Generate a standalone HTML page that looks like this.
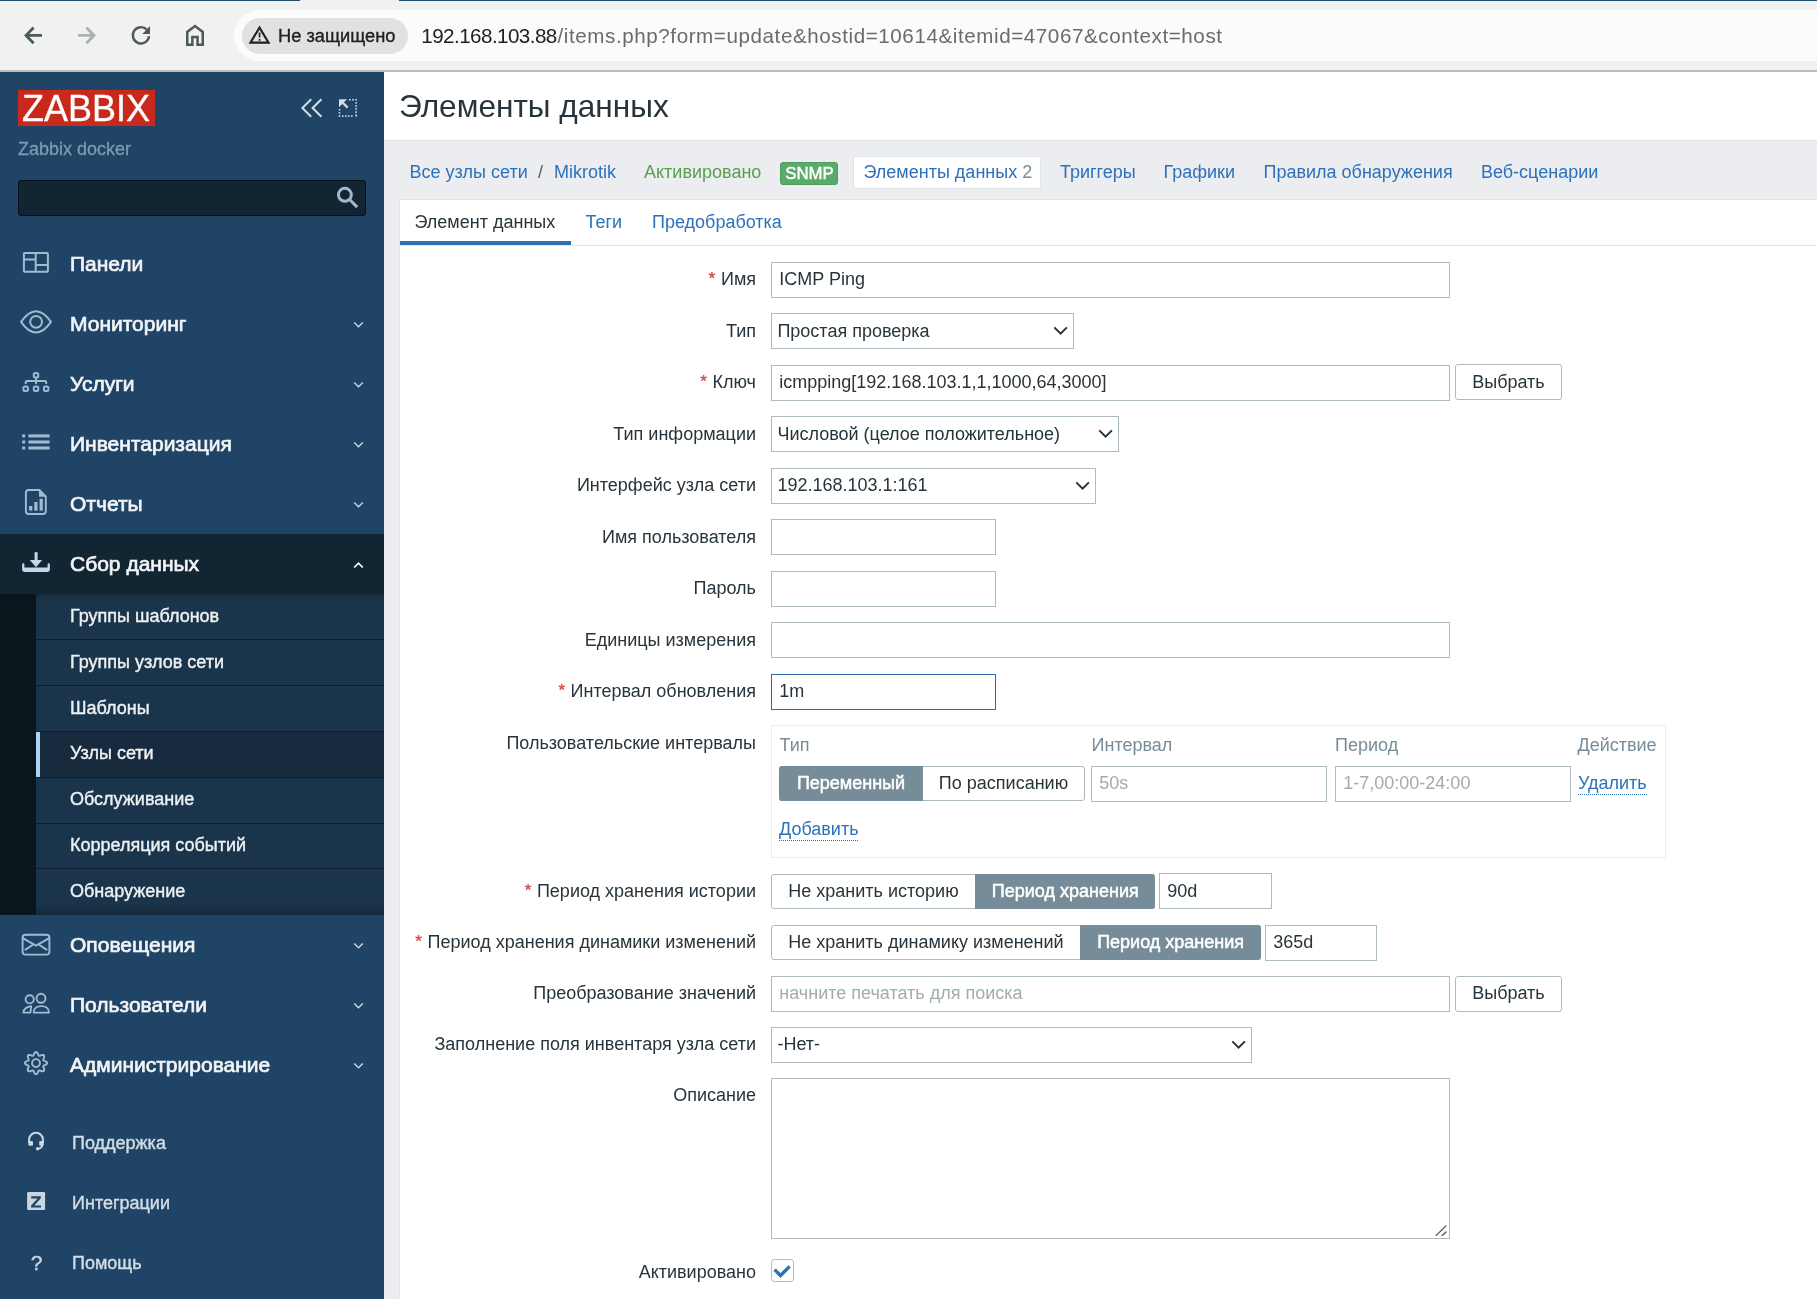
<!DOCTYPE html>
<html><head><meta charset="utf-8"><title>Zabbix</title>
<style>
html,body{margin:0;padding:0;}
body{width:1817px;height:1299px;overflow:hidden;position:relative;background:#ebedf0;font-family:"Liberation Sans",sans-serif;}
.t{position:absolute;white-space:nowrap;}
svg{position:absolute;overflow:visible;}
</style></head><body>
<div id="root" style="position:absolute;left:0;top:0;width:1817px;height:1299px;overflow:hidden">
<div style="position:absolute;left:0px;top:0px;width:1817px;height:70px;background:#f1f1f1"></div>
<div style="position:absolute;left:0px;top:0px;width:300px;height:1px;background:#1d4f6b"></div>
<div style="position:absolute;left:399px;top:0px;width:1418px;height:1px;background:#1d4f6b"></div>
<div style="position:absolute;left:0px;top:70px;width:1817px;height:2px;background:#b9bdbc"></div>
<div style="position:absolute;left:234px;top:10px;width:1623px;height:51px;background:#fbfbfb;border-radius:26px"></div>
<div style="position:absolute;left:242px;top:18px;width:166px;height:36px;background:#e1e1e1;border-radius:18px"></div>
<svg style="left:0;top:0" width="1817" height="72" viewBox="0 0 1817 72"><g fill="none" stroke="#4b5b56" stroke-width="2.8" stroke-linecap="butt"><path d="M42 35.4 H26.5 M33.6 27.6 L26 35.4 L33.6 43.2"/></g><g fill="none" stroke="#a9b2ae" stroke-width="2.8"><path d="M78 35.4 H93.5 M86.4 27.6 L94 35.4 L86.4 43.2"/></g><g fill="none" stroke="#4b5b56" stroke-width="2.4"><path d="M149.1 36.2 A8.15 8.15 0 1 1 146.8 29.6"/></g><path d="M150 26.1 V33.9 H142.3 Z" fill="#4b5b56"/><path d="M187.25 44.65 V31.9 L195 26 L202.75 31.9 V44.65 H197.55 V37.05 H192.35 V44.65 Z" fill="none" stroke="#4b5b56" stroke-width="2.5" stroke-linejoin="miter"/><path d="M259.5 27.6 L250.4 42.6 H268.6 Z" fill="none" stroke="#202124" stroke-width="2.1" stroke-linejoin="miter"/><rect x="258.7" y="32.5" width="1.7" height="5" fill="#202124"/><rect x="258.7" y="39" width="1.7" height="1.8" fill="#202124"/></svg>
<div style="position:absolute;left:0px;top:72px;width:384px;height:1227px;background:#1f4466"></div>
<div style="position:absolute;left:18px;top:90px;width:137px;height:36px;background:#c8291c"></div>
<svg style="left:0;top:0" width="384" height="1299" viewBox="0 0 384 1299"><g fill="none" stroke="#d3dde5" stroke-width="2"><path d="M311.2 99.2 L302.4 108 L311.2 116.8 M321.4 99.2 L312.6 108 L321.4 116.8"/></g><g fill="#d3dde5"><path d="M339 99.2 H347 L339 107.2 Z"/><rect x="355.30" y="98.95" width="1.6" height="1.6"/><rect x="355.30" y="102.10" width="1.6" height="1.6"/><rect x="355.30" y="105.20" width="1.6" height="1.6"/><rect x="355.30" y="108.10" width="1.6" height="1.6"/><rect x="355.30" y="111.30" width="1.6" height="1.6"/><rect x="355.30" y="114.40" width="1.6" height="1.6"/><rect x="338.70" y="115.26" width="1.6" height="1.6"/><rect x="341.90" y="115.26" width="1.6" height="1.6"/><rect x="345.00" y="115.26" width="1.6" height="1.6"/><rect x="347.90" y="115.26" width="1.6" height="1.6"/><rect x="351.00" y="115.26" width="1.6" height="1.6"/><rect x="338.70" y="109.00" width="1.6" height="1.6"/><rect x="338.70" y="112.10" width="1.6" height="1.6"/><rect x="349.00" y="98.95" width="1.6" height="1.6"/><rect x="352.20" y="98.95" width="1.6" height="1.6"/><path d="M355.3 116.8 L356.8 115.3 L356.8 116.8 Z"/></g><path d="M341.5 101.5 L347.6 107.6" stroke="#d3dde5" stroke-width="2.3"/></svg>
<div style="position:absolute;left:18px;top:180px;width:346px;height:34px;background:#112533;border:1px solid #071118;border-radius:3px"></div>
<svg style="left:0;top:0" width="384" height="300" viewBox="0 0 384 300"><circle cx="344.9" cy="194.8" r="6.45" fill="none" stroke="#a3b7c8" stroke-width="3"/><path d="M349.6 199.5 L357.2 207.1" stroke="#a3b7c8" stroke-width="3"/></svg>
<div style="position:absolute;left:0px;top:534px;width:384px;height:60px;background:#112533"></div>
<div style="position:absolute;left:0px;top:594px;width:384px;height:320.7px;background:#1a344b"></div>
<div style="position:absolute;left:0px;top:594px;width:36px;height:320.7px;background:#0a151c"></div>
<div style="position:absolute;left:36px;top:638.9px;width:348px;height:1px;background:#0d1d29"></div>
<div style="position:absolute;left:36px;top:684.8px;width:348px;height:1px;background:#0d1d29"></div>
<div style="position:absolute;left:36px;top:731.7px;width:348px;height:45.9px;background:#172a3e"></div>
<div style="position:absolute;left:36px;top:731.7px;width:4px;height:45.9px;background:#a7d5f7"></div>
<div style="position:absolute;left:36px;top:730.7px;width:348px;height:1px;background:#0d1d29"></div>
<div style="position:absolute;left:36px;top:776.6px;width:348px;height:1px;background:#0d1d29"></div>
<div style="position:absolute;left:36px;top:822.5px;width:348px;height:1px;background:#0d1d29"></div>
<div style="position:absolute;left:36px;top:868.4px;width:348px;height:1px;background:#0d1d29"></div>
<div style="position:absolute;left:36px;top:594px;width:348px;height:7px;background:linear-gradient(rgba(0,0,0,0.18), rgba(0,0,0,0))"></div>
<div style="position:absolute;left:36px;top:903px;width:348px;height:11.7px;background:linear-gradient(rgba(0,0,0,0), rgba(0,0,0,0.22))"></div>
<svg style="left:0;top:0" width="384" height="1299" viewBox="0 0 384 1299"><g fill="none" stroke="#c9d5df" stroke-width="1.5"><path d="M354.2 322.5 L358.5 326.8 L362.8 322.5"/><path d="M354.2 382.5 L358.5 386.8 L362.8 382.5"/><path d="M354.2 442.5 L358.5 446.8 L362.8 442.5"/><path d="M354.2 502.5 L358.5 506.8 L362.8 502.5"/><path d="M354.2 943.5 L358.5 947.8 L362.8 943.5"/><path d="M354.2 1003.5 L358.5 1007.8 L362.8 1003.5"/><path d="M354.2 1063.5 L358.5 1067.8 L362.8 1063.5"/></g><path d="M354.2 567.5 L358.5 563.2 L362.8 567.5" fill="none" stroke="#ffffff" stroke-width="1.7"/><g fill="none" stroke="#a1bbd1" stroke-width="2"><rect x="23.9" y="252.9" width="24" height="18.9" rx="1"/><path d="M35.7 252.9 V271.8 M23.9 259.6 H35.7 M35.7 265 H47.9"/><path d="M21 321.8 Q36 300.5 51 321.8 Q36 343.1 21 321.8 Z" stroke-linejoin="round"/><circle cx="36.1" cy="321.8" r="5.9"/></g><g fill="none" stroke="#a1bbd1" stroke-width="1.6"><g stroke-width="2"><rect x="33.8" y="373" width="4.5" height="4.4" rx="1.5"/><rect x="23.45" y="386.5" width="4.5" height="4.4" rx="1.5"/><rect x="33.8" y="386.5" width="4.5" height="4.4" rx="1.5"/><rect x="43.9" y="386.5" width="4.5" height="4.4" rx="1.5"/><path d="M36.05 377.4 V384 M25.7 384 V382.2 Q25.7 381 26.9 381 H45 Q46.2 381 46.2 382.2 V384"/></g></g><g fill="#a1bbd1"><rect x="22.2" y="434.4" width="3" height="3"/><rect x="22.2" y="440.5" width="3" height="3"/><rect x="22.2" y="446.5" width="3" height="3"/><rect x="28.4" y="434.4" width="21.2" height="3"/><rect x="28.4" y="440.5" width="21.2" height="3"/><rect x="28.4" y="446.5" width="21.2" height="3"/></g><g fill="none" stroke="#a1bbd1" stroke-width="1.6"><path d="M28.6 490 H39.4 L45.8 496.4 V511.3 Q45.8 514 43.1 514 H28.6 Q25.9 514 25.9 511.3 V492.7 Q25.9 490 28.6 490 Z" stroke-width="1.9"/></g><g fill="#a1bbd1"><path d="M39 489.5 L46.3 496.8 H39 Z"/><rect x="29.1" y="506" width="3.2" height="4.6"/><rect x="34.3" y="502" width="3.2" height="8.6"/><rect x="39.6" y="498.7" width="3.2" height="11.9"/></g><g fill="#c0d7ec"><rect x="34.6" y="552" width="3" height="9" rx="1.2"/><path d="M29.8 560 H42.2 L36 567.2 Z"/><path d="M22.1 564.3 Q22.1 563.2 23.25 563.2 Q24.4 563.2 24.4 564.3 V567.6 H47.6 V564.3 Q47.6 563.2 48.75 563.2 Q49.9 563.2 49.9 564.3 V569.6 Q49.9 571.9 47.6 571.9 H24.4 Q22.1 571.9 22.1 569.6 Z"/></g><g fill="none" stroke="#a1bbd1" stroke-width="1.9"><rect x="22.6" y="934.7" width="26.8" height="19.9" rx="2.8"/><path d="M23.2 938.3 L36 945.6 L48.8 938.3 M25.4 949.6 L32.2 945.2 M46.6 949.6 L39.8 945.2" stroke-linecap="round"/><circle cx="29.7" cy="999.3" r="4.1"/><circle cx="41" cy="998.3" r="4.5"/><path d="M31.2 1006.3 C27 1006.6 23.3 1009 23.3 1012.6 H30.4 Z" stroke-linejoin="round"/><path d="M33.6 1012.6 C33.6 1008.6 37 1006.1 41.3 1006.1 C45.6 1006.1 49 1008.6 49 1012.6 Z" stroke-linejoin="round"/><path d="M47.10 1063.10 L46.86 1063.81 L46.21 1064.44 L45.32 1064.95 L44.40 1065.35 L43.68 1065.71 L43.30 1066.12 L43.28 1066.69 L43.53 1067.45 L43.90 1068.38 L44.17 1069.37 L44.18 1070.28 L43.85 1070.95 L43.18 1071.28 L42.27 1071.27 L41.28 1071.00 L40.35 1070.63 L39.59 1070.38 L39.02 1070.40 L38.61 1070.78 L38.25 1071.50 L37.85 1072.42 L37.34 1073.31 L36.71 1073.96 L36.00 1074.20 L35.29 1073.96 L34.66 1073.31 L34.15 1072.42 L33.75 1071.50 L33.39 1070.78 L32.98 1070.40 L32.41 1070.38 L31.65 1070.63 L30.72 1071.00 L29.73 1071.27 L28.82 1071.28 L28.15 1070.95 L27.82 1070.28 L27.83 1069.37 L28.10 1068.38 L28.47 1067.45 L28.72 1066.69 L28.70 1066.12 L28.32 1065.71 L27.60 1065.35 L26.68 1064.95 L25.79 1064.44 L25.14 1063.81 L24.90 1063.10 L25.14 1062.39 L25.79 1061.76 L26.68 1061.25 L27.60 1060.85 L28.32 1060.49 L28.70 1060.08 L28.72 1059.51 L28.47 1058.75 L28.10 1057.82 L27.83 1056.83 L27.82 1055.92 L28.15 1055.25 L28.82 1054.92 L29.73 1054.93 L30.72 1055.20 L31.65 1055.57 L32.41 1055.82 L32.98 1055.80 L33.39 1055.42 L33.75 1054.70 L34.15 1053.78 L34.66 1052.89 L35.29 1052.24 L36.00 1052.00 L36.71 1052.24 L37.34 1052.89 L37.85 1053.78 L38.25 1054.70 L38.61 1055.42 L39.02 1055.80 L39.59 1055.82 L40.35 1055.57 L41.28 1055.20 L42.27 1054.93 L43.18 1054.92 L43.85 1055.25 L44.18 1055.92 L44.17 1056.83 L43.90 1057.82 L43.53 1058.75 L43.28 1059.51 L43.30 1060.08 L43.68 1060.49 L44.40 1060.85 L45.32 1061.25 L46.21 1061.76 L46.86 1062.39 L47.10 1063.10 Z"/><circle cx="36" cy="1063.1" r="3.95"/></g><g fill="none" stroke="#ccd7e0" stroke-width="2"><path d="M29.1 1143 V1139.6 A6.9 6.9 0 0 1 42.9 1139.6 V1143"/><path d="M42.3 1145.2 Q41.8 1148.4 37.8 1148.8"/></g><g fill="#ccd7e0"><rect x="28.4" y="1140.9" width="4.6" height="4.8" rx="1.2"/><rect x="39.2" y="1140.9" width="4.6" height="4.8" rx="1.2"/><circle cx="37.6" cy="1148.8" r="1.7"/></g><rect x="27.1" y="1192" width="18" height="18" rx="1.2" fill="#c9d5df"/><path d="M31.2 1196.3 H40.8 V1198.3 L34.3 1205.4 H41 V1207.6 H31.1 V1205.6 L37.6 1198.5 H31.2 Z" fill="#1f4466"/></svg>
<div style="position:absolute;left:384px;top:72px;width:1433px;height:68px;background:#ffffff"></div>
<div style="position:absolute;left:384px;top:140px;width:1433px;height:1px;background:#dfe4e7"></div>
<div style="position:absolute;left:780px;top:162px;width:56px;height:21px;background:#5aab6a;border:1px solid #4f9e5f;border-radius:3px"></div>
<div style="position:absolute;left:853px;top:156px;width:186px;height:31px;background:#ffffff;border:1px solid #dfe4e7;border-radius:3px"></div>
<div style="position:absolute;left:399px;top:199px;width:1428px;height:1110px;background:#ffffff;border:1px solid #dfe4e7"></div>
<div style="position:absolute;left:400px;top:245px;width:1417px;height:1px;background:#dfe4e7"></div>
<div style="position:absolute;left:400px;top:241px;width:171px;height:4px;background:#2f6fb3"></div>
<div style="position:absolute;left:771px;top:262px;width:677px;height:34px;background:#fff;border:1px solid #acbbc2"></div>
<div style="position:absolute;left:771px;top:313px;width:301px;height:34px;background:#fff;border:1px solid #acbbc2"></div>
<div style="position:absolute;left:771px;top:365px;width:677px;height:34px;background:#fff;border:1px solid #acbbc2"></div>
<div style="position:absolute;left:1455px;top:364px;width:105px;height:34px;background:#fff;border:1px solid #acbbc2;border-radius:3px"></div>
<div style="position:absolute;left:771px;top:416px;width:346px;height:34px;background:#fff;border:1px solid #acbbc2"></div>
<div style="position:absolute;left:771px;top:468px;width:323px;height:34px;background:#fff;border:1px solid #acbbc2"></div>
<div style="position:absolute;left:771px;top:519px;width:223px;height:34px;background:#fff;border:1px solid #acbbc2"></div>
<div style="position:absolute;left:771px;top:571px;width:223px;height:34px;background:#fff;border:1px solid #acbbc2"></div>
<div style="position:absolute;left:771px;top:622px;width:677px;height:34px;background:#fff;border:1px solid #acbbc2"></div>
<div style="position:absolute;left:771px;top:674px;width:223px;height:34px;background:#fff;border:1px solid #2c69a5"></div>
<div style="position:absolute;left:771px;top:725px;width:893px;height:131px;border:1px solid #ebeef0;background:#fff"></div>
<div style="position:absolute;left:779px;top:766px;width:304px;height:33px;background:#fff;border:1px solid #acbbc2;border-radius:3px"></div>
<div style="position:absolute;left:779px;top:766px;width:144px;height:35px;background:#768d99;border-radius:3px 0 0 3px"></div>
<div style="position:absolute;left:1091px;top:766px;width:234px;height:34px;background:#fff;border:1px solid #acbbc2"></div>
<div style="position:absolute;left:1335px;top:766px;width:234px;height:34px;background:#fff;border:1px solid #acbbc2"></div>
<svg style="left:0;top:0" width="1817" height="1299" viewBox="0 0 1817 1299"><g stroke="#2d71bb" stroke-width="1" stroke-dasharray="1 1"><path d="M1578 794.5 H1647"/><path d="M779 840.5 H859"/></g></svg>
<div style="position:absolute;left:771px;top:874px;width:382px;height:33px;background:#fff;border:1px solid #acbbc2;border-radius:3px"></div>
<div style="position:absolute;left:975px;top:874px;width:180px;height:35px;background:#768d99;border-radius:0 3px 3px 0"></div>
<div style="position:absolute;left:1159px;top:873px;width:111px;height:34px;background:#fff;border:1px solid #acbbc2"></div>
<div style="position:absolute;left:771px;top:925px;width:488px;height:33px;background:#fff;border:1px solid #acbbc2;border-radius:3px"></div>
<div style="position:absolute;left:1080px;top:925px;width:181px;height:35px;background:#768d99;border-radius:0 3px 3px 0"></div>
<div style="position:absolute;left:1265px;top:925px;width:110px;height:34px;background:#fff;border:1px solid #acbbc2"></div>
<div style="position:absolute;left:771px;top:976px;width:677px;height:34px;background:#fff;border:1px solid #acbbc2"></div>
<div style="position:absolute;left:1455px;top:976px;width:105px;height:33.5px;background:#fff;border:1px solid #acbbc2;border-radius:3px"></div>
<div style="position:absolute;left:771px;top:1027px;width:479px;height:34px;background:#fff;border:1px solid #acbbc2"></div>
<div style="position:absolute;left:771px;top:1078px;width:677px;height:159px;background:#fff;border:1px solid #acbbc2"></div>
<svg style="left:0;top:0" width="1817" height="1299" viewBox="0 0 1817 1299"><g fill="none" stroke="#505050" stroke-width="1.3" stroke-linecap="round"><path d="M1436.2 1235.4 L1446 1225.9 M1442.2 1235.4 L1446 1231.9"/></g><g fill="none" stroke="#28343b" stroke-width="2"><path d="M1054.3 327.40000000000003 L1060.6 333.7 L1066.8999999999999 327.40000000000003"/><path d="M1099.3 430.40000000000003 L1105.6 436.7 L1111.8999999999999 430.40000000000003"/><path d="M1076.3 482.40000000000003 L1082.6 488.7 L1088.8999999999999 482.40000000000003"/><path d="M1232.3 1041.3999999999999 L1238.6 1047.7 L1244.8999999999999 1041.3999999999999"/></g><rect x="771.5" y="1259.5" width="22" height="22" rx="3" fill="#fff" stroke="#acbbc2" stroke-width="1"/><path d="M774.6 1269.6 L780.5 1275.5 L789.6 1266.4" fill="none" stroke="#2f6fb5" stroke-width="3.4"/><path d="M711.90 275.10 L711.90 272.40 M711.90 275.10 L714.47 274.27 M711.90 275.10 L713.49 277.28 M711.90 275.10 L710.31 277.28 M711.90 275.10 L709.33 274.27 M703.60 378.10 L703.60 375.40 M703.60 378.10 L706.17 377.27 M703.60 378.10 L705.19 380.28 M703.60 378.10 L702.01 380.28 M703.60 378.10 L701.03 377.27 M561.80 687.10 L561.80 684.40 M561.80 687.10 L564.37 686.27 M561.80 687.10 L563.39 689.28 M561.80 687.10 L560.21 689.28 M561.80 687.10 L559.23 686.27 M528.10 887.10 L528.10 884.40 M528.10 887.10 L530.67 886.27 M528.10 887.10 L529.69 889.28 M528.10 887.10 L526.51 889.28 M528.10 887.10 L525.53 886.27 M418.60 938.10 L418.60 935.40 M418.60 938.10 L421.17 937.27 M418.60 938.10 L420.19 940.28 M418.60 938.10 L417.01 940.28 M418.60 938.10 L416.03 937.27" fill="none" stroke="#d9534f" stroke-width="1.5" stroke-linecap="round"/></svg>
<div id="txt" style="position:absolute;left:0;top:0;width:1817px;height:1299px;will-change:transform">
<div class="t" style="left:278px;top:27.01px;font-size:18.3px;line-height:18.3px;color:#202124;font-weight:400;-webkit-text-stroke:0.35px #202124;">Не защищено</div>
<div class="t" style="left:421.3px;top:26.16px;font-size:20.6px;line-height:20.6px;color:#202124;font-weight:400;letter-spacing:-0.55px;">192.168.103.88</div>
<div class="t" style="left:557.5px;top:26.16px;font-size:20.6px;line-height:20.6px;color:#6b6b6b;font-weight:400;letter-spacing:0.58px;">/items.php?form=update&amp;hostid=10614&amp;itemid=47067&amp;context=host</div>
<div class="t" style="left:22px;top:90.72px;font-size:36px;line-height:36px;color:#ffffff;font-weight:400;-webkit-text-stroke:0.3px #fff;">ZABBIX</div>
<div class="t" style="left:18px;top:139.56px;font-size:18px;line-height:18px;color:#7f9bb0;font-weight:400;-webkit-text-stroke:0.3px #7f9bb0;">Zabbix docker</div>
<div class="t" style="left:70px;top:253.22px;font-size:21px;line-height:21px;color:#f2f4f6;font-weight:400;-webkit-text-stroke:0.7px #f2f4f6;">Панели</div>
<div class="t" style="left:70px;top:313.22px;font-size:21px;line-height:21px;color:#f2f4f6;font-weight:400;-webkit-text-stroke:0.7px #f2f4f6;">Мониторинг</div>
<div class="t" style="left:70px;top:373.22px;font-size:21px;line-height:21px;color:#f2f4f6;font-weight:400;-webkit-text-stroke:0.7px #f2f4f6;">Услуги</div>
<div class="t" style="left:70px;top:433.22px;font-size:21px;line-height:21px;color:#f2f4f6;font-weight:400;-webkit-text-stroke:0.7px #f2f4f6;">Инвентаризация</div>
<div class="t" style="left:70px;top:493.22px;font-size:21px;line-height:21px;color:#f2f4f6;font-weight:400;-webkit-text-stroke:0.7px #f2f4f6;">Отчеты</div>
<div class="t" style="left:70px;top:553.22px;font-size:21px;line-height:21px;color:#f2f4f6;font-weight:400;-webkit-text-stroke:0.7px #f2f4f6;">Сбор данных</div>
<div class="t" style="left:70px;top:606.76px;font-size:18px;line-height:18px;color:#eef1f3;font-weight:400;-webkit-text-stroke:0.4px #eef1f3;">Группы шаблонов</div>
<div class="t" style="left:70px;top:652.66px;font-size:18px;line-height:18px;color:#eef1f3;font-weight:400;-webkit-text-stroke:0.4px #eef1f3;">Группы узлов сети</div>
<div class="t" style="left:70px;top:698.56px;font-size:18px;line-height:18px;color:#eef1f3;font-weight:400;-webkit-text-stroke:0.4px #eef1f3;">Шаблоны</div>
<div class="t" style="left:70px;top:744.46px;font-size:18px;line-height:18px;color:#eef1f3;font-weight:400;-webkit-text-stroke:0.4px #eef1f3;">Узлы сети</div>
<div class="t" style="left:70px;top:790.36px;font-size:18px;line-height:18px;color:#eef1f3;font-weight:400;-webkit-text-stroke:0.4px #eef1f3;">Обслуживание</div>
<div class="t" style="left:70px;top:836.26px;font-size:18px;line-height:18px;color:#eef1f3;font-weight:400;-webkit-text-stroke:0.4px #eef1f3;">Корреляция событий</div>
<div class="t" style="left:70px;top:882.16px;font-size:18px;line-height:18px;color:#eef1f3;font-weight:400;-webkit-text-stroke:0.4px #eef1f3;">Обнаружение</div>
<div class="t" style="left:70px;top:934.22px;font-size:21px;line-height:21px;color:#f2f4f6;font-weight:400;-webkit-text-stroke:0.7px #f2f4f6;">Оповещения</div>
<div class="t" style="left:70px;top:994.22px;font-size:21px;line-height:21px;color:#f2f4f6;font-weight:400;-webkit-text-stroke:0.7px #f2f4f6;">Пользователи</div>
<div class="t" style="left:70px;top:1054.22px;font-size:21px;line-height:21px;color:#f2f4f6;font-weight:400;-webkit-text-stroke:0.7px #f2f4f6;">Администрирование</div>
<div class="t" style="left:72px;top:1133.76px;font-size:18px;line-height:18px;color:#d3dde5;font-weight:400;-webkit-text-stroke:0.4px #d3dde5;">Поддержка</div>
<div class="t" style="left:72px;top:1193.76px;font-size:18px;line-height:18px;color:#d3dde5;font-weight:400;-webkit-text-stroke:0.4px #d3dde5;">Интеграции</div>
<div class="t" style="left:72px;top:1253.76px;font-size:18px;line-height:18px;color:#d3dde5;font-weight:400;-webkit-text-stroke:0.4px #d3dde5;">Помощь</div>
<div class="t" style="left:30.8px;top:1252.22px;font-size:21px;line-height:21px;color:#c9d5df;font-weight:400;-webkit-text-stroke:0.4px #c9d5df;">?</div>
<div class="t" style="left:399px;top:91.24px;font-size:31.6px;line-height:31.6px;color:#28343b;font-weight:400;">Элементы данных</div>
<div class="t" style="left:409.5px;top:162.76px;font-size:18px;line-height:18px;color:#2d71bb;font-weight:400;">Все узлы сети</div>
<div class="t" style="left:538px;top:162.76px;font-size:18px;line-height:18px;color:#4f5f67;font-weight:400;">/</div>
<div class="t" style="left:554px;top:162.76px;font-size:18px;line-height:18px;color:#2d71bb;font-weight:400;">Mikrotik</div>
<div class="t" style="left:644px;top:162.76px;font-size:18px;line-height:18px;color:#5a9f4e;font-weight:400;">Активировано</div>
<div class="t" style="left:785.2px;top:165.78px;font-size:16.8px;line-height:16.8px;color:#ffffff;font-weight:400;-webkit-text-stroke:0.45px #fff;">SNMP</div>
<div class="t" style="left:863.5px;top:162.76px;font-size:18px;line-height:18px;color:#2d71bb;font-weight:400;">Элементы данных <span style="color:#768d99">2</span></div>
<div class="t" style="left:1060px;top:162.76px;font-size:18px;line-height:18px;color:#2d71bb;font-weight:400;">Триггеры</div>
<div class="t" style="left:1163.5px;top:162.76px;font-size:18px;line-height:18px;color:#2d71bb;font-weight:400;">Графики</div>
<div class="t" style="left:1263.5px;top:162.76px;font-size:18px;line-height:18px;color:#2d71bb;font-weight:400;">Правила обнаружения</div>
<div class="t" style="left:1481px;top:162.76px;font-size:18px;line-height:18px;color:#2d71bb;font-weight:400;">Веб-сценарии</div>
<div class="t" style="left:414.5px;top:213.26px;font-size:18px;line-height:18px;color:#28343b;font-weight:400;">Элемент данных</div>
<div class="t" style="left:585.5px;top:213.26px;font-size:18px;line-height:18px;color:#2d71bb;font-weight:400;">Теги</div>
<div class="t" style="left:652px;top:213.26px;font-size:18px;line-height:18px;color:#2d71bb;font-weight:400;">Предобработка</div>
<div class="t" style="right:1061px;text-align:right;top:269.76px;font-size:18px;line-height:18px;color:#28343b;font-weight:400;">Имя</div>
<div class="t" style="left:779.3px;top:269.76px;font-size:18px;line-height:18px;color:#28343b;font-weight:400;">ICMP Ping</div>
<div class="t" style="right:1061px;text-align:right;top:321.76px;font-size:18px;line-height:18px;color:#28343b;font-weight:400;">Тип</div>
<div class="t" style="left:777.4px;top:321.76px;font-size:18px;line-height:18px;color:#28343b;font-weight:400;">Простая проверка</div>
<div class="t" style="right:1061px;text-align:right;top:372.76px;font-size:18px;line-height:18px;color:#28343b;font-weight:400;">Ключ</div>
<div class="t" style="left:779.3px;top:372.76px;font-size:18px;line-height:18px;color:#28343b;font-weight:400;">icmpping[192.168.103.1,1,1000,64,3000]</div>
<div class="t" style="left:1108.5px;width:800px;text-align:center;top:372.76px;font-size:18px;line-height:18px;color:#28343b;font-weight:400;">Выбрать</div>
<div class="t" style="right:1061px;text-align:right;top:424.76px;font-size:18px;line-height:18px;color:#28343b;font-weight:400;">Тип информации</div>
<div class="t" style="left:777.4px;top:424.76px;font-size:18px;line-height:18px;color:#28343b;font-weight:400;">Числовой (целое положительное)</div>
<div class="t" style="right:1061px;text-align:right;top:475.76px;font-size:18px;line-height:18px;color:#28343b;font-weight:400;">Интерфейс узла сети</div>
<div class="t" style="left:777.4px;top:475.76px;font-size:18px;line-height:18px;color:#28343b;font-weight:400;">192.168.103.1:161</div>
<div class="t" style="right:1061px;text-align:right;top:527.76px;font-size:18px;line-height:18px;color:#28343b;font-weight:400;">Имя пользователя</div>
<div class="t" style="right:1061px;text-align:right;top:578.76px;font-size:18px;line-height:18px;color:#28343b;font-weight:400;">Пароль</div>
<div class="t" style="right:1061px;text-align:right;top:630.76px;font-size:18px;line-height:18px;color:#28343b;font-weight:400;">Единицы измерения</div>
<div class="t" style="right:1061px;text-align:right;top:681.76px;font-size:18px;line-height:18px;color:#28343b;font-weight:400;">Интервал обновления</div>
<div class="t" style="left:779.3px;top:681.76px;font-size:18px;line-height:18px;color:#28343b;font-weight:400;">1m</div>
<div class="t" style="right:1061px;text-align:right;top:733.76px;font-size:18px;line-height:18px;color:#28343b;font-weight:400;">Пользовательские интервалы</div>
<div class="t" style="left:779.5px;top:735.76px;font-size:18px;line-height:18px;color:#768d99;font-weight:400;">Тип</div>
<div class="t" style="left:1091.5px;top:735.76px;font-size:18px;line-height:18px;color:#768d99;font-weight:400;">Интервал</div>
<div class="t" style="left:1335px;top:735.76px;font-size:18px;line-height:18px;color:#768d99;font-weight:400;">Период</div>
<div class="t" style="left:1577.5px;top:735.76px;font-size:18px;line-height:18px;color:#768d99;font-weight:400;">Действие</div>
<div class="t" style="left:451px;width:800px;text-align:center;top:773.76px;font-size:18px;line-height:18px;color:#ffffff;font-weight:400;-webkit-text-stroke:0.5px #fff;">Переменный</div>
<div class="t" style="left:603.5px;width:800px;text-align:center;top:773.76px;font-size:18px;line-height:18px;color:#28343b;font-weight:400;">По расписанию</div>
<div class="t" style="left:1099.3px;top:773.76px;font-size:18px;line-height:18px;color:#a1abb0;font-weight:400;">50s</div>
<div class="t" style="left:1343.3px;top:773.76px;font-size:18px;line-height:18px;color:#a1abb0;font-weight:400;">1-7,00:00-24:00</div>
<div class="t" style="left:1578px;top:773.76px;font-size:18px;line-height:18px;color:#2d71bb;font-weight:400;">Удалить</div>
<div class="t" style="left:779px;top:819.76px;font-size:18px;line-height:18px;color:#2d71bb;font-weight:400;">Добавить</div>
<div class="t" style="right:1061px;text-align:right;top:881.76px;font-size:18px;line-height:18px;color:#28343b;font-weight:400;">Период хранения истории</div>
<div class="t" style="left:473.5px;width:800px;text-align:center;top:881.76px;font-size:18px;line-height:18px;color:#28343b;font-weight:400;">Не хранить историю</div>
<div class="t" style="left:665.3px;width:800px;text-align:center;top:881.76px;font-size:18px;line-height:18px;color:#ffffff;font-weight:400;-webkit-text-stroke:0.5px #fff;">Период хранения</div>
<div class="t" style="left:1167.3px;top:881.76px;font-size:18px;line-height:18px;color:#28343b;font-weight:400;">90d</div>
<div class="t" style="right:1061px;text-align:right;top:932.76px;font-size:18px;line-height:18px;color:#28343b;font-weight:400;">Период хранения динамики изменений</div>
<div class="t" style="left:526px;width:800px;text-align:center;top:932.76px;font-size:18px;line-height:18px;color:#28343b;font-weight:400;">Не хранить динамику изменений</div>
<div class="t" style="left:770.5999999999999px;width:800px;text-align:center;top:932.76px;font-size:18px;line-height:18px;color:#ffffff;font-weight:400;-webkit-text-stroke:0.5px #fff;">Период хранения</div>
<div class="t" style="left:1273.3px;top:932.76px;font-size:18px;line-height:18px;color:#28343b;font-weight:400;">365d</div>
<div class="t" style="right:1061px;text-align:right;top:983.76px;font-size:18px;line-height:18px;color:#28343b;font-weight:400;">Преобразование значений</div>
<div class="t" style="left:779.3px;top:983.76px;font-size:18px;line-height:18px;color:#a1abb0;font-weight:400;">начните печатать для поиска</div>
<div class="t" style="left:1108.5px;width:800px;text-align:center;top:983.76px;font-size:18px;line-height:18px;color:#28343b;font-weight:400;">Выбрать</div>
<div class="t" style="right:1061px;text-align:right;top:1034.76px;font-size:18px;line-height:18px;color:#28343b;font-weight:400;">Заполнение поля инвентаря узла сети</div>
<div class="t" style="left:777.4px;top:1034.76px;font-size:18px;line-height:18px;color:#28343b;font-weight:400;">-Нет-</div>
<div class="t" style="right:1061px;text-align:right;top:1085.76px;font-size:18px;line-height:18px;color:#28343b;font-weight:400;">Описание</div>
<div class="t" style="right:1061px;text-align:right;top:1262.76px;font-size:18px;line-height:18px;color:#28343b;font-weight:400;">Активировано</div>
</div></div></body></html>
